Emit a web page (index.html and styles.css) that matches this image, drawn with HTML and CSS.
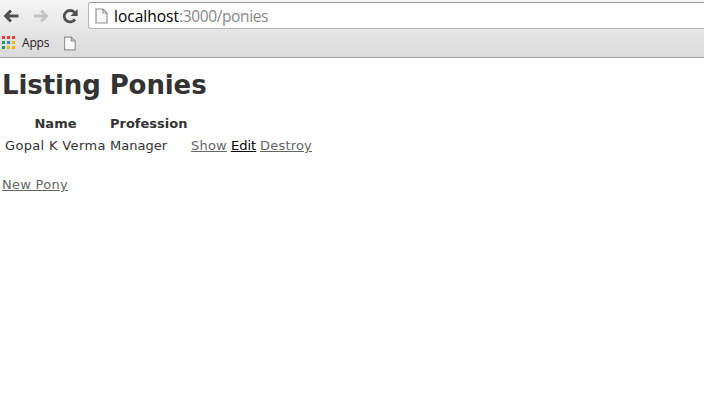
FILE: index.html
```html
<!DOCTYPE html>
<html lang="en">
<head>
<meta charset="utf-8">
<title>Ponies</title>
<link rel="stylesheet" href="styles.css">
</head>
<body>
<header class="browser">
  <div class="toolbar">
    <svg class="nav" width="16" height="14" viewBox="0 0 16 14"><path d="M8 1.5 2.5 7 8 12.5M3 7H15.5" fill="none" stroke="#505050" stroke-width="2.9"/></svg>
    <svg class="nav forward" width="16" height="14" viewBox="0 0 16 14"><path d="M8 1.5 13.5 7 8 12.5M13 7H.5" fill="none" stroke="#c3c3c3" stroke-width="2.9"/></svg>
    <svg class="nav reload" width="16" height="16" viewBox="0 0 16 16"><path d="M12.4 4.3A5.9 5.7 0 1 0 13 11.4" fill="none" stroke="#505050" stroke-width="2.8"/><path d="M15.6 1V8H8.5Z" fill="#505050"/></svg>
    <div class="address">
      <svg class="page" width="13" height="16" viewBox="0 0 13 16"><path d="M1 1H8L12 5V15H1ZM8 1V5H12" fill="#f6f6f6" stroke="#939393" stroke-width="1.2"/></svg>
      <span class="host">localhost</span><span class="path">:3000/ponies</span>
    </div>
  </div>
  <div class="bookmarks">
    <span class="grid"><i class="r"></i><i class="r"></i><i class="r"></i><i class="g"></i><i class="b"></i><i class="y"></i><i class="g"></i><i class="y"></i><i class="y"></i></span>
    <span class="apps">Apps</span>
    <svg width="12" height="15" viewBox="0 0 12 15"><path d="M.6 1.1H7.2L11.2 5V13.9H.6ZM7.2 1.1V5H11.2" fill="#f8f8f8" stroke="#939393" stroke-width="1.1"/></svg>
  </div>
</header>
<main>
  <h1>Listing Ponies</h1>
  <table>
    <colgroup><col class="name"><col class="job"><col class="show"><col class="edit"><col class="destroy"></colgroup>
    <thead><tr><th>Name</th><th>Profession</th><th colspan="3"></th></tr></thead>
    <tbody><tr><td class="person">Gopal K Verma</td><td>Manager</td><td class="action"><a href="#">Show</a></td><td><a class="active" href="#">Edit</a></td><td class="action"><a href="#">Destroy</a></td></tr></tbody>
  </table>
  <a class="new" href="#">New Pony</a>
</main>
</body>
</html>
```
FILE: styles.css
```css
* { box-sizing: border-box; }
body {
  margin: 0;
  background: #fff;
  color: #333;
  font: 13px/18px Verdana, "DejaVu Sans", sans-serif;
  overflow: hidden;
}
svg { display: block; flex: none; }
.browser {
  height: 58px;
  background: linear-gradient(#f5f5f5, #dedede 48px, #dcdcdc);
  border-bottom: 1px solid #a3a3a3;
  font-family: "Open Sans", "Noto Sans", sans-serif;
}
.toolbar {
  display: flex;
  align-items: center;
  height: 31px;
  padding-left: 3px;
}
.forward { margin-left: 14px; }
.reload { margin-left: 13px; }
.address {
  display: flex;
  align-items: center;
  flex: 1;
  height: 27px;
  margin-left: 10px;
  padding-left: 6px;
  background: #fff;
  border: 1px solid #b5b5b5;
  border-top-color: #999;
  border-right: 0;
  border-radius: 3px 0 0 3px;
  font-size: 15.5px;
  line-height: 24px;
}
.page { margin-right: 6px; }
.host { color: #000; }
.path { color: #888; letter-spacing: -.36px; }
.bookmarks {
  display: flex;
  align-items: center;
  height: 25px;
  padding-left: 2px;
}
.grid {
  display: grid;
  grid-template-columns: repeat(3, 3px);
  grid-auto-rows: 3px;
  gap: 2px;
  margin-bottom: 2px;
}
.r { background: #f23a34; }
.g { background: #239b56; }
.b { background: #347fe5; }
.y { background: #f5b400; }
.apps {
  width: 27px;
  margin: -2px 15px 0 7px;
  color: #222;
  font-size: 12px;
  letter-spacing: -.2px;
}
main { padding: 12px 2px; }
h1 {
  margin: 0;
  font-size: 26px;
  line-height: 30px;
  letter-spacing: -.1px;
}
table {
  width: 313px;
  margin-top: 12px;
  border-spacing: 2px;
  table-layout: fixed;
}
th, td {
  height: 20px;
  padding: 1px;
  white-space: nowrap;
}
.name { width: 103px; }
.job { width: 79px; }
.show { width: 38px; }
.edit { width: 27px; }
.destroy { width: 54px; }
td { text-align: left; }
.person { letter-spacing: .34px; }
.action { letter-spacing: .2px; }
a { color: #666; }
.active { color: #000; }
.new {
  display: inline-block;
  margin-top: 18px;
  letter-spacing: .28px;
}
```
